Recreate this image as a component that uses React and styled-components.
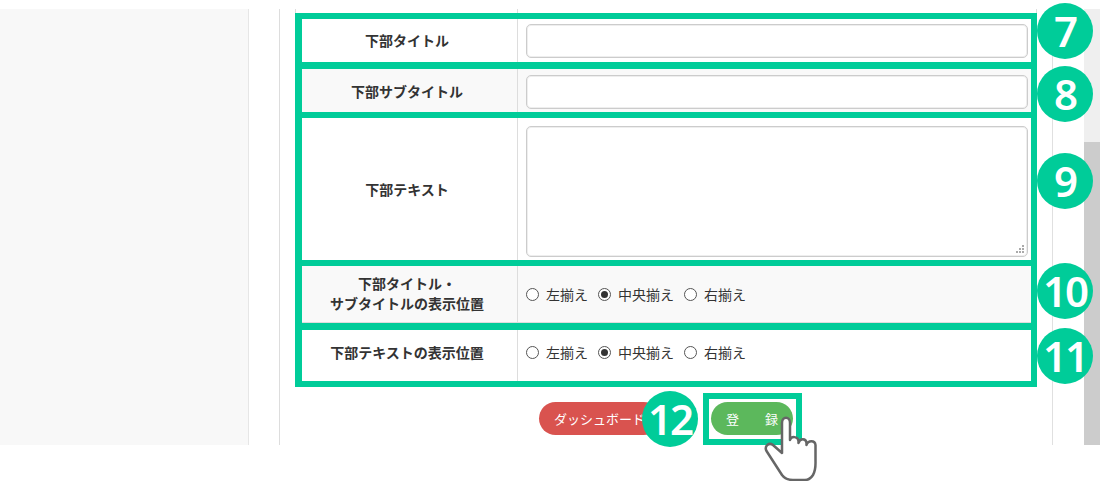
import React from 'react'
import styled, { createGlobalStyle } from 'styled-components'

const GREEN = '#00cc99'

const GlobalStyle = createGlobalStyle`
html, body {
  margin: 0;
  padding: 0;
  background: #fff;
  overflow: hidden;
}
body {
  font-family: "Noto Sans CJK JP", "Noto Sans", sans-serif;
  color: #333;
}
* { box-sizing: border-box; }
`

const Page = styled.div`
position: relative;
width: 1100px;
height: 481px;
padding-top: 9px;
`

const Columns = styled.div`
display: flex;
height: 436px;
`

const Sidebar = styled.aside`
width: 249px;
background: #f8f8f8;
border-right: 1px solid #e6e6e6;
`

const Gutter = styled.div`
width: ${p => p.$width}px;
`

const Main = styled.main`
width: 774px;
padding-left: 15px;
border-left: 1px solid #ddd;
border-right: 1px solid #e0e0e0;
`

const TopStrip = styled.div`
display: flex;
width: 742px;
height: 4px;
border-left: 1px solid #ddd;
border-right: 1px solid #ddd;
`

const TopStripCell = styled.div`
width: 222px;
border-right: 1px solid #ddd;
`

const Table = styled.div`
width: 742px;
border: 6px solid ${GREEN};
border-left-width: 7px;
border-bottom-width: 6px;
`

const Row = styled.div`
display: flex;
height: ${p => p.$height}px;
background: ${p => (p.$shaded ? '#f9f9f9' : '#fff')};
${p => p.$sep && `border-bottom: ${p.$sep}px solid ${GREEN};`}
${p => p.$line && 'box-shadow: inset 0 -1px 0 #ddd;'}
`

const Label = styled.div`
width: 216px;
flex: none;
display: flex;
align-items: center;
justify-content: center;
padding-right: 5px;
padding-bottom: ${p => p.$lift || 0}px;
font-size: 14px;
font-weight: 700;
line-height: 20px;
text-align: center;
border-right: 1px solid #ddd;
`

const Value = styled.div`
flex: 1;
display: flex;
align-items: ${p => (p.$top ? 'flex-start' : 'center')};
padding: ${p => p.$pad || 0}px 3px ${p => p.$lift || 0}px 8px;
`

const TextInput = styled.input`
display: block;
width: 100%;
height: 34px;
border: 1px solid #ccc;
border-radius: 5px;
background: #fff;
box-shadow: inset 0 0 0 1px #eee;
outline: none;
`

const AreaWrap = styled.div`
position: relative;
width: 100%;
height: 131px;
`

const TextArea = styled.textarea`
display: block;
width: 100%;
height: 100%;
border: 1px solid #ccc;
border-radius: 5px;
background: #fff;
box-shadow: inset 0 0 0 1px #eee;
outline: none;
resize: none;
`

const Grip = styled.svg`
position: absolute;
right: 4px;
bottom: 4px;
width: 8px;
height: 8px;
`

const RadioGroup = styled.div`
display: flex;
align-items: center;
font-size: 14px;
color: #333;
`

const RadioItem = styled.label`
display: flex;
align-items: center;
margin-right: 10px;
`

const RadioMark = styled.span`
width: 13px;
height: 13px;
margin-right: 7px;
margin-top: 2px;
border: 1px solid #555;
border-radius: 50%;
display: flex;
align-items: center;
justify-content: center;
background: #fff;
&::after {
  content: '';
  display: ${p => (p.$on ? 'block' : 'none')};
  width: 7px;
  height: 7px;
  border-radius: 50%;
  background: #333;
}
`

const Buttons = styled.div`
display: flex;
align-items: flex-start;
margin-top: 6px;
padding-left: 244px;
`

const Pill = styled.button`
height: 33px;
padding: 0 15px;
border: none;
border-radius: 17px;
color: #fff;
font-family: inherit;
font-size: 13px;
white-space: pre;
background: ${p => p.$bg};
`

const RedPill = styled(Pill)`
width: 121px;
margin-top: 9px;
text-align: left;
`

const ButtonFrame = styled.div`
margin-left: 43px;
width: 99px;
height: 52px;
padding: 3px 0 0 2px;
border: 6px solid ${GREEN};
`

const Gap = styled.div`
width: 31px;
`

const Scrollbar = styled.div`
width: 16px;
padding-top: 133px;
background: #efefef;
`

const ScrollThumb = styled.div`
height: 100%;
background: #ccc;
`

const Badge = styled.div`
position: absolute;
left: ${p => p.$x - 28}px;
top: ${p => p.$y - 28}px;
width: 56px;
height: 56px;
border-radius: 50%;
background: ${GREEN};
color: #fff;
display: flex;
align-items: center;
justify-content: center;
font-family: "Noto Sans", sans-serif;
font-size: 42px;
font-weight: 600;
letter-spacing: -2px;
line-height: 1;
`

const Hand = styled.svg`
position: absolute;
left: 755px;
top: 410px;
width: 70px;
height: 71px;
`

const AlignRadios = () => (
  <RadioGroup>
    <RadioItem><RadioMark />左揃え</RadioItem>
    <RadioItem><RadioMark $on />中央揃え</RadioItem>
    <RadioItem><RadioMark />右揃え</RadioItem>
  </RadioGroup>
)

const badges = [
  { n: 7, x: 1065, y: 31 },
  { n: 8, x: 1065, y: 94 },
  { n: 9, x: 1065, y: 181 },
  { n: 10, x: 1065, y: 291 },
  { n: 11, x: 1065, y: 356 },
  { n: 12, x: 670, y: 419 },
]

export default function App() {
  return (
    <Page>
      <GlobalStyle />
      <Columns>
        <Sidebar />
        <Gutter $width={30} />
        <Main>
          <TopStrip><TopStripCell /></TopStrip>
          <Table>
            <Row $height={50} $sep={7}>
              <Label $lift={2}>下部タイトル</Label>
              <Value $pad={1}><TextInput type="text" /></Value>
            </Row>
            <Row $height={49} $sep={6} $shaded>
              <Label>下部サブタイトル</Label>
              <Value $pad={3}><TextInput type="text" /></Value>
            </Row>
            <Row $height={148} $sep={6}>
              <Label>下部テキスト</Label>
              <Value $top $pad={8}>
                <AreaWrap>
                  <TextArea />
                  <Grip viewBox="0 0 8 8">
                    <g fill="#aaa">
                      <rect x="0" y="6" width="2" height="2" />
                      <rect x="3" y="6" width="2" height="2" />
                      <rect x="6" y="6" width="2" height="2" />
                      <rect x="3" y="3" width="2" height="2" />
                      <rect x="6" y="3" width="2" height="2" />
                      <rect x="6" y="0" width="2" height="2" />
                    </g>
                  </Grip>
                </AreaWrap>
              </Value>
            </Row>
            <Row $height={64} $sep={7} $shaded $line>
              <Label $lift={3}>下部タイトル・<br />サブタイトルの表示位置</Label>
              <Value $lift={2}><AlignRadios /></Value>
            </Row>
            <Row $height={51}>
              <Label $lift={8}>下部テキストの表示位置</Label>
              <Value $lift={8}><AlignRadios /></Value>
            </Row>
          </Table>
          <Buttons>
            <RedPill $bg="#d9534f">ダッシュボード</RedPill>
            <ButtonFrame>
              <Pill $bg="#5cb85c">{'登　　録'}</Pill>
            </ButtonFrame>
          </Buttons>
        </Main>
        <Gap />
        <Scrollbar><ScrollThumb /></Scrollbar>
      </Columns>
      {badges.map(b => (
        <Badge key={b.n} $x={b.x} $y={b.y}>{b.n}</Badge>
      ))}
      <Hand viewBox="0 0 70 71">
        <path
          d="M27 41 V13 C27 6 35 6 35 13 V30 C36 26 43 26 43.500 31 V33 C45 28 51 28 51.500 33 V35 C53 30 60 30 60.500 35 V50 C60.500 56 61 60 58 65 C56 68 54 70 50 70 H38 C33 70 30 69 27 65 L11.500 41 C9 36 14 32 18 35 L27 43 Z"
          fill="#fff"
          stroke="#666"
          strokeWidth="2.5"
          strokeLinejoin="round"
        />
      </Hand>
    </Page>
  )
}
